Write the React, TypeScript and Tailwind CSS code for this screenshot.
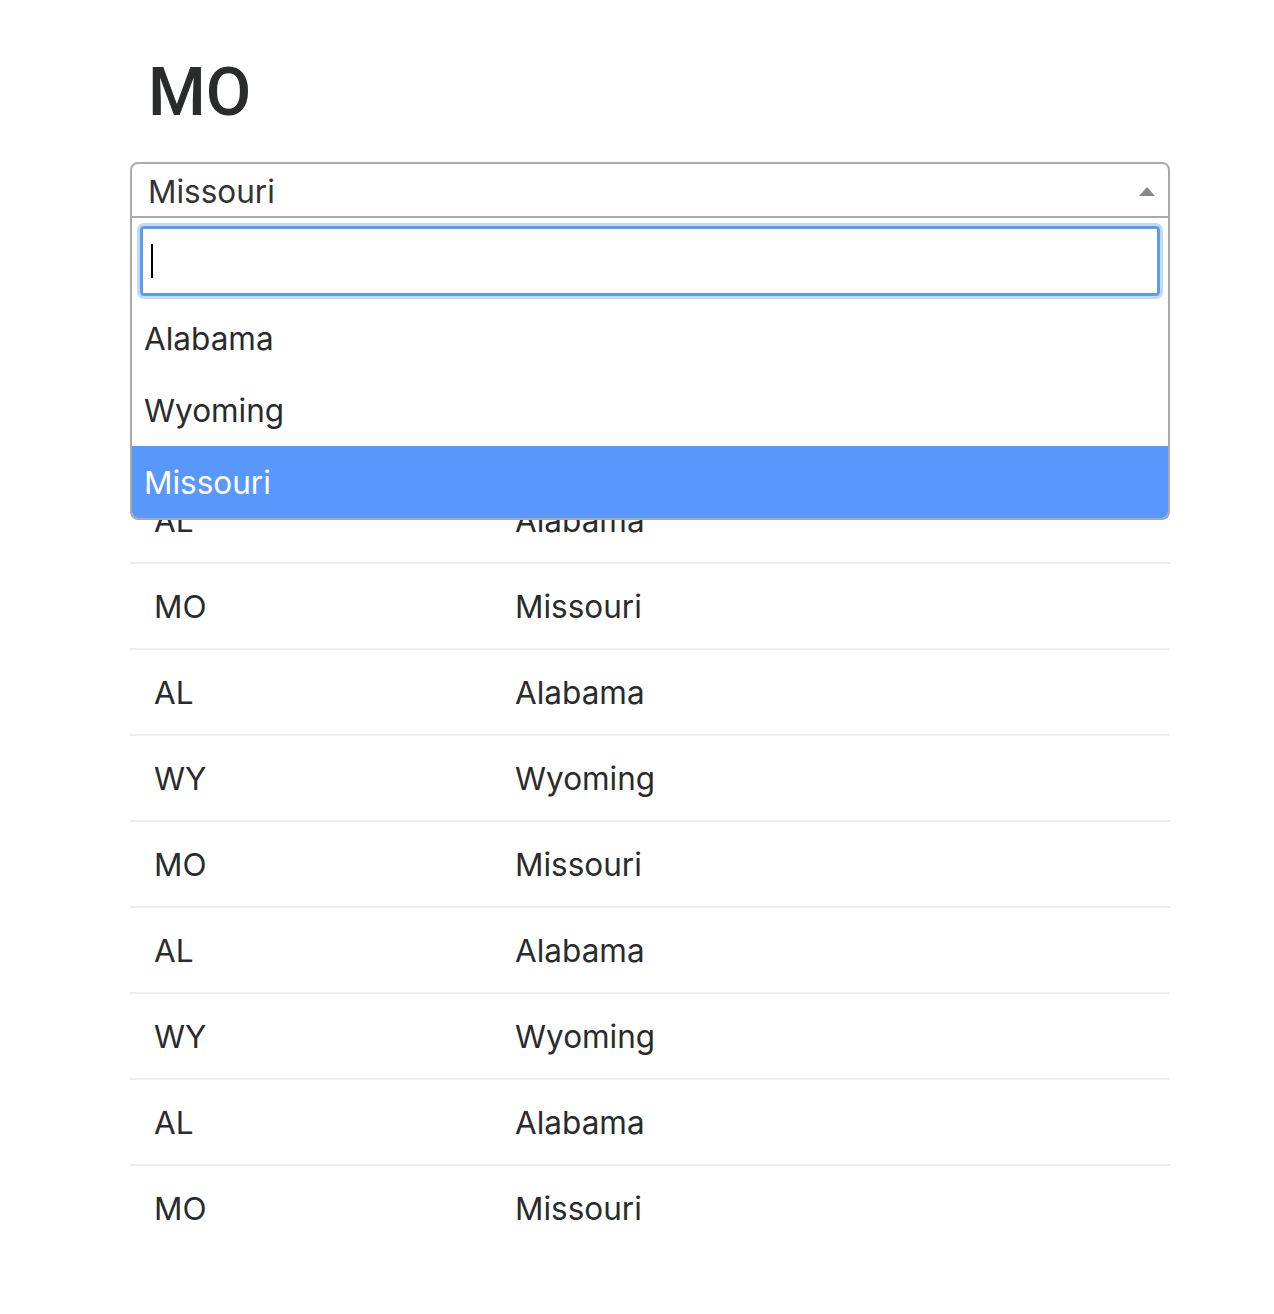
import React from "react";

const rows: [string, string][] = [
  ["WY", "Wyoming"],
  ["MO", "Missouri"],
  ["WY", "Wyoming"],
  ["AL", "Alabama"],
  ["MO", "Missouri"],
  ["AL", "Alabama"],
  ["WY", "Wyoming"],
  ["MO", "Missouri"],
  ["AL", "Alabama"],
  ["WY", "Wyoming"],
  ["AL", "Alabama"],
  ["MO", "Missouri"],
];

export default function App() {
  return (
    <div
      className="min-h-[1314px] bg-white text-[#292b2c]"
      style={{ fontFamily: "Inter, 'Noto Sans', sans-serif" }}
    >
      <div className="ml-[130px] w-[1040px] pt-[53px]">
        <h1
          className="pl-[18px] text-[66px] leading-[79px] font-medium mb-[30px]"
          style={{ fontFamily: "Roboto, 'Liberation Sans', Arial, sans-serif" }}
        >
          MO
        </h1>
        <div className="relative">
          <div className="h-[56px] border-2 border-[#aaaaaa] rounded-t-[8px] bg-white flex items-center pl-[16px] pr-[12px] pt-[4px] text-[31.5px] leading-[40px] text-[#333]">
            <span className="flex-1">Missouri</span>
            <svg width="16" height="10" viewBox="0 0 16 10" className="mr-[1px] -mt-[3px]">
              <polygon points="0,10 8,1 16,10" fill="#888888" />
            </svg>
          </div>
          <div className="absolute left-0 right-0 top-[56px] z-10 bg-white border-x-2 border-b-2 border-[#aaaaaa] rounded-b-[8px] overflow-hidden">
            <div className="px-[8px] pt-[8px] pb-[7px]">
              <div className="h-[70px] border-[3px] border-[#5d9cec] rounded-[4px] shadow-[0_0_0_3px_rgba(120,175,245,0.45)] flex items-center pl-[8px]">
                <span className="w-[2px] h-[34px] bg-black" />
              </div>
            </div>
            <div className="text-[31.5px] leading-[40px]">
              <div className="h-[72px] flex items-center pl-[12px]">Alabama</div>
              <div className="h-[71px] flex items-center pl-[12px]">Wyoming</div>
              <div className="h-[72px] flex items-center pl-[12px] pt-[2px] bg-[#5897fb] text-white">
                Missouri
              </div>
            </div>
          </div>
          <div className="text-[31.5px] leading-[40px]">
            {rows.map(([abbr, name], i) => (
              <div
                key={i}
                className="grid grid-cols-[362px_1fr] h-[86px] border-t-2 border-[#eceeef] items-center pt-[2px]"
              >
                <div className="pl-[24px]">{abbr}</div>
                <div className="pl-[23px]">{name}</div>
              </div>
            ))}
          </div>
        </div>
      </div>
    </div>
  );
}
